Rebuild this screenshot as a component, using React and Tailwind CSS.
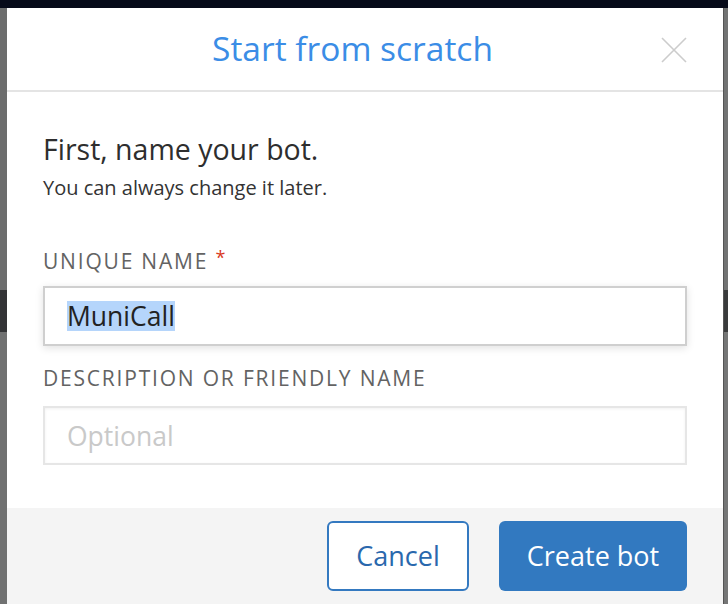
import React from 'react';

const font = { fontFamily: '"Open Sans", Lato, sans-serif' };

function CloseIcon() {
  return (
    <svg width="26" height="26" viewBox="0 0 26 26" fill="none" stroke="#cccccc" strokeWidth="1.6">
      <path d="M1 1L25 25M25 1L1 25" />
    </svg>
  );
}

export default function App() {
  return (
    <div className="w-[728px] h-[604px] flex flex-col bg-[#6f7070] overflow-hidden" style={font}>
      <div className="h-[8px] bg-[#060a19] shrink-0"></div>
      <div className="flex flex-1 min-h-0">
        {/* left backdrop strip */}
        <div className="w-[7px] flex flex-col shrink-0">
          <div className="h-[282px] bg-[#6c6d6d]"></div>
          <div className="h-[42px] bg-[#333436]"></div>
          <div className="flex-1 bg-[#707171]"></div>
        </div>

        {/* dialog */}
        <div className="flex-1 flex flex-col bg-white border-r border-[#555]">
          <div className="h-[84px] shrink-0 flex items-center justify-center relative border-b-2 border-[#e4e4e4] pr-[25px]">
            <h2 className="text-[33.5px] leading-[40px] text-[#3b8de6] mt-[-2px]">Start from scratch</h2>
            <button className="absolute right-[36px] top-[29px]">
              <CloseIcon />
            </button>
          </div>

          <div className="flex-1 px-[36px] pt-[40px]">
            <h3 className="text-[28.5px] leading-[34px] text-[#2e2e2e]">First, name your bot.</h3>
            <p className="mt-[10px] text-[20px] leading-[24px] text-[#333]">You can always change it later.</p>

            <label className="block mt-[49px] text-[21px] leading-[24px] tracking-[1.8px] text-[#636363]">
              UNIQUE NAME <span className="text-[#d9391e] align-top text-[18px] leading-[16px]">*</span>
            </label>
            <div className="mt-[13px] h-[60px] border-2 border-[#cfcfcf] shadow-[0_2px_8px_rgba(0,0,0,0.12)] flex items-center pl-[22px]">
              <span className="inline-block h-[30px] text-[26.5px] leading-[30px] text-[#222] bg-[#b5d5fb]">MuniCall</span>
            </div>

            <label className="block mt-[20px] text-[21px] leading-[24px] tracking-[1.8px] text-[#636363]">
              DESCRIPTION OR FRIENDLY NAME
            </label>
            <div className="mt-[16px] h-[59px] border-2 border-[#e6e6e6] shadow-[inset_0_1px_3px_rgba(0,0,0,0.06)] flex items-center pl-[22px]">
              <span className="text-[26.5px] leading-[30px] text-[#c9c9c9]">Optional</span>
            </div>
          </div>

          <div className="h-[96px] shrink-0 bg-[#f4f4f4] flex items-center justify-end gap-[30px] px-[36px]">
            <button className="w-[142px] h-[70px] rounded-[6px] border-2 border-[#3479c0] bg-white text-[27px] text-[#2a68ad]">
              Cancel
            </button>
            <button className="w-[188px] h-[70px] rounded-[6px] bg-[#3279c0] text-[27px] text-white">
              Create bot
            </button>
          </div>
        </div>

        {/* right backdrop strip */}
        <div className="w-[4px] flex flex-col shrink-0">
          <div className="h-[282px] bg-[#727373]"></div>
          <div className="h-[42px] bg-[#3a3b3c]"></div>
          <div className="flex-1 bg-[#757676]"></div>
        </div>
      </div>
    </div>
  );
}
